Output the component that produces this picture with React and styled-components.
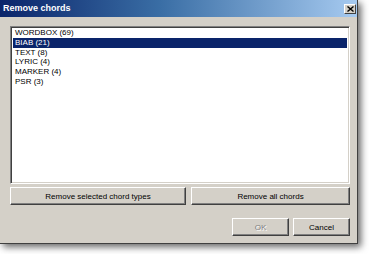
import React from "react";
import styled, { createGlobalStyle } from "styled-components";

const Global = createGlobalStyle`
  html, body { margin: 0; padding: 0; background: #ffffff; }
  body { font-family: "Liberation Sans", Arial, sans-serif; }
`;

const Stage = styled.div`
  width: 369px;
  height: 254px;
  overflow: hidden;
  background: #ffffff;
`;

const Window = styled.div`
  width: 358px;
  height: 244px;
  box-sizing: border-box;
  background: #d4d0c8;
  border-right: 1px solid #404040;
  border-bottom: 1px solid #404040;
  box-shadow: 3px 3px 7px rgba(0, 0, 0, 0.6);
  display: flex;
  flex-direction: column;
`;

const TitleBar = styled.div`
  height: 17px;
  flex: none;
  display: flex;
  align-items: center;
  justify-content: space-between;
  padding: 0 1px 0 3px;
  background: linear-gradient(to right, #0a246a 0%, #3a6ea5 45%, #a6caf0 100%);
`;

const Title = styled.span`
  color: #ffffff;
  font-weight: bold;
  font-size: 9px;
  line-height: 17px;
`;

const CloseButton = styled.div`
  width: 12px;
  height: 10px;
  box-sizing: border-box;
  background: #d4d0c8;
  border-top: 1px solid #ffffff;
  border-left: 1px solid #ffffff;
  border-right: 1px solid #404040;
  border-bottom: 1px solid #404040;
  display: flex;
  align-items: center;
  justify-content: center;
`;

const Body = styled.div`
  flex: 1;
  padding: 9px 7px 0 10px;
  display: flex;
  flex-direction: column;
`;

const ListBox = styled.div`
  height: 158px;
  box-sizing: border-box;
  background: #ffffff;
  border-top: 1px solid #808080;
  border-left: 1px solid #808080;
  border-right: 1px solid #ffffff;
  border-bottom: 1px solid #ffffff;
  box-shadow: inset 1px 1px 0 #404040, inset -1px -1px 0 #d4d0c8;
  padding: 1px 2px;
`;

const Item = styled.div`
  height: 9.75px;
  line-height: 9.75px;
  font-size: 8px;
  padding-left: 2px;
  white-space: nowrap;
  color: ${(p) => (p.$selected ? "#ffffff" : "#000000")};
  background: ${(p) => (p.$selected ? "#0a246a" : "transparent")};
`;

const ActionRow = styled.div`
  margin-top: 3px;
  display: grid;
  grid-template-columns: 176px 159px;
  column-gap: 5px;
`;

const Button = styled.div`
  height: 18px;
  box-sizing: border-box;
  background: #d4d0c8;
  border-top: 1px solid #ffffff;
  border-left: 1px solid #ffffff;
  border-right: 1px solid #404040;
  border-bottom: 1px solid #404040;
  box-shadow: inset -1px -1px 0 #808080;
  display: flex;
  align-items: center;
  justify-content: center;
  font-size: 8px;
  color: ${(p) => (p.$disabled ? "#808080" : "#000000")};
  text-shadow: ${(p) => (p.$disabled ? "1px 1px 0 #ffffff" : "none")};
`;

const FooterRow = styled.div`
  margin-top: 13px;
  display: flex;
  justify-content: flex-end;
  gap: 4px;
`;

const FooterButton = styled(Button)`
  width: ${(p) => p.$w}px;
`;

const items = [
  "WORDBOX (69)",
  "BIAB (21)",
  "TEXT (8)",
  "LYRIC (4)",
  "MARKER (4)",
  "PSR (3)",
];

export default function App() {
  return (
    <>
      <Global />
      <Stage>
        <Window>
          <TitleBar>
            <Title>Remove chords</Title>
            <CloseButton>
              <svg width="7" height="6" viewBox="0 0 7 6">
                <path d="M0.5 0.5 L6.5 5.5 M6.5 0.5 L0.5 5.5" stroke="#000" strokeWidth="1.4" />
              </svg>
            </CloseButton>
          </TitleBar>
          <Body>
            <ListBox>
              {items.map((t, i) => (
                <Item key={t} $selected={i === 1}>
                  {t}
                </Item>
              ))}
            </ListBox>
            <ActionRow>
              <Button>Remove selected chord types</Button>
              <Button>Remove all chords</Button>
            </ActionRow>
            <FooterRow>
              <FooterButton $w={57} $disabled>
                OK
              </FooterButton>
              <FooterButton $w={57}>Cancel</FooterButton>
            </FooterRow>
          </Body>
        </Window>
      </Stage>
    </>
  );
}
